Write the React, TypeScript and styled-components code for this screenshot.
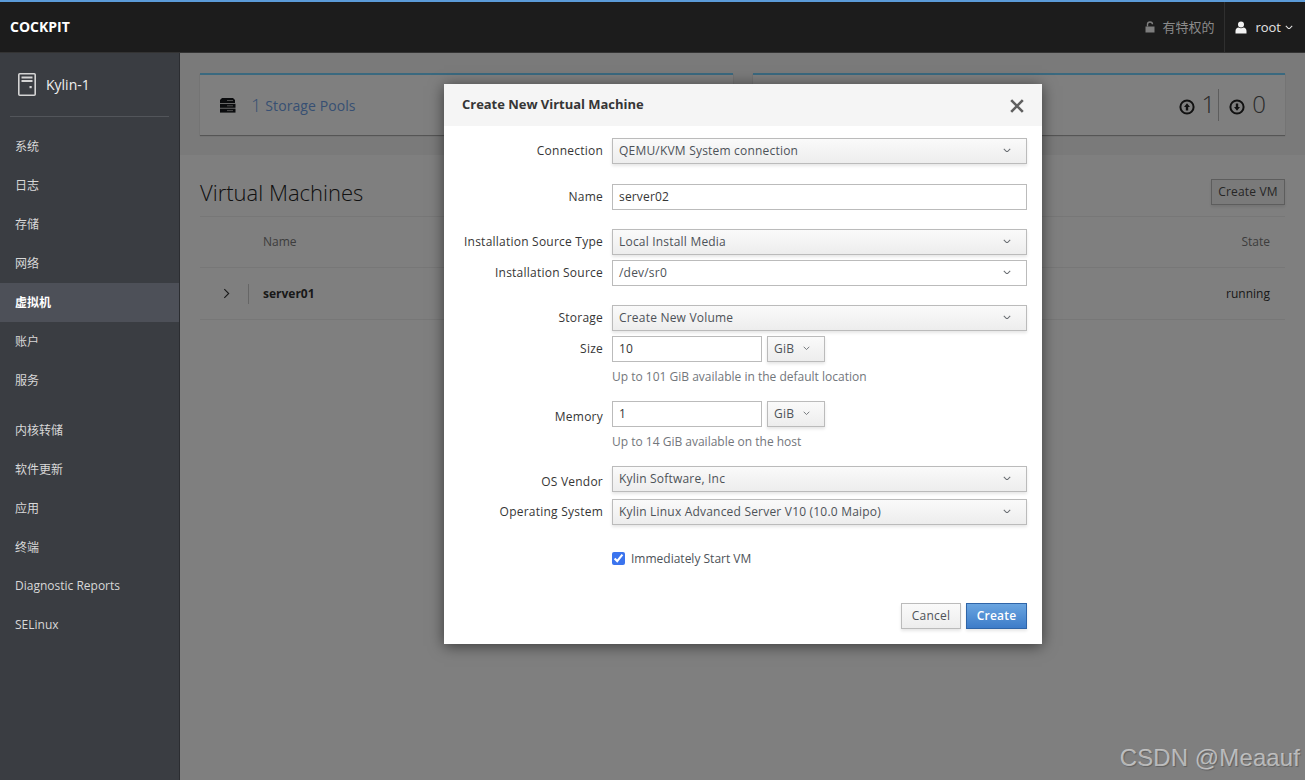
import React from "react";
import styled, { createGlobalStyle } from "styled-components";

const Global = createGlobalStyle`
  html, body { margin: 0; padding: 0; height: 100%; overflow: hidden; }
  #root { height: 780px; }
  * { box-sizing: border-box; }
  body { font-family: "Open Sans", "Noto Sans CJK SC", sans-serif; font-size: 12px; color: #363636; }
`;

const Page = styled.div`
  width: 1305px; height: 780px; display: flex; flex-direction: column; position: relative; overflow: hidden;
`;
const TopBar = styled.header`
  height: 53px; flex: none; background: #1c1c1c; border-top: 2px solid #5b9bd8; border-bottom: 1px solid #333;
  display: flex; align-items: center; color: #fff;
`;
const Brand = styled.div`
  font-weight: 700; font-size: 14px; margin-left: 10px; margin-top: -1px; flex: 1;
`;
const Privilege = styled.div`
  display: flex; align-items: center; gap: 7px; color: #8a8a8a; font-size: 13px; padding: 0 10px 2px 0; height: 100%;
`;
const UserMenu = styled.div`
  display: flex; align-items: center; height: 100%; border-left: 1px solid #2f2f2f; padding: 0 12px 0 10px; gap: 4px; color: #e4e4e4; font-size: 13px;
`;
const UserName = styled.span`
  margin-left: 4px;
`;
const Body = styled.div`
  flex: 1; display: flex; min-height: 0;
`;
const Sidebar = styled.nav`
  width: 180px; flex: none; background: #3a3d42; border-right: 1px solid #2b2d31; color: #d8d8d8;
`;
const Host = styled.div`
  height: 64px; margin: 0 10px; padding: 0 0 0 8px; border-bottom: 1px solid #52555a; display: flex; align-items: center; gap: 10px;
  font-size: 14px; color: #f0f0f0;
`;
const NavList = styled.div<{ $first?: boolean }>`
  padding-top: ${(p) => (p.$first ? "10px" : "11px")};
`;
const NavItem = styled.div<{ $active?: boolean }>`
  height: 39px; display: flex; align-items: center; padding: 0 0 2px 15px; font-size: 12px;
  font-weight: ${(p) => (p.$active ? 700 : 400)};
  color: ${(p) => (p.$active ? "#fff" : "#d8d8d8")};
  background: ${(p) => (p.$active ? "#4d5058" : "transparent")};
`;
const Main = styled.main`
  flex: 1; position: relative; background: #fff; min-width: 0;
`;
const Summary = styled.section`
  height: 102px; background: #f5f5f5; padding: 20px 20px 0; display: grid; grid-template-columns: 533px 532px; gap: 20px;
`;
const Card = styled.div<{ $end?: boolean }>`
  height: 62px; background: #fff; border-top: 2px solid #74d2ff; box-shadow: 0 1px 1px rgba(0,0,0,.3); display: flex; align-items: center;
  justify-content: ${(p) => (p.$end ? "flex-end" : "flex-start")};
  padding: ${(p) => (p.$end ? "0 14px 0 0" : "0 0 0 19px")};
`;
const PoolLink = styled.div`
  display: flex; align-items: center; color: #6e9fe6; font-size: 14px; margin-left: 15px; letter-spacing: .08px;
`;
const PoolCount = styled.span`
  font-size: 18px; font-weight: 300; margin-right: 4px; line-height: 20px;
`;
const Network = styled.div<{ $pad: number }>`
  display: flex; align-items: center; color: #555; font-size: 24px; font-weight: 300; gap: 7px;
  padding-right: ${(p) => p.$pad}px;
`;
const Digit = styled.span`
  padding-bottom: 4px;
`;
const NetworkSep = styled.div`
  width: 1px; height: 32px; background: #bbb; margin: 0 10px 0 0;
`;
const Content = styled.section`
  padding: 0 20px;
`;
const TitleRow = styled.div`
  height: 62px; display: flex; align-items: center; justify-content: space-between; padding-top: 12px;
  border-bottom: 1px solid #eee;
`;
const Title = styled.h1`
  font-size: 22px; font-weight: 300; margin: 0; color: #222;
`;
const GhostButton = styled.button`
  height: 26px; width: 74px; padding: 0; font: 400 12px "Open Sans", sans-serif; letter-spacing: .17px; color: #4d4d4d; background: #f4f4f4;
  border: 1px solid #bbb; box-shadow: 0 2px 3px rgba(3,3,3,.1);
`;
const TableHead = styled.div`
  height: 51px; border-bottom: 1px solid #eee; display: flex; align-items: center; justify-content: space-between;
  padding: 0 15px 2px 63px; color: #7a7a7a;
`;
const TableRow = styled.div`
  height: 52px; border-bottom: 1px solid #eee; display: flex; align-items: center; padding-right: 15px; color: #333;
`;
const Expand = styled.div`
  width: 49px; height: 20px; flex: none; border-right: 1px solid #ccc; margin-right: 14px; display: flex; align-items: center; padding-left: 23px;
`;
const RowName = styled.strong`
  font-weight: 700; flex: 1;
`;
const Backdrop = styled.div`
  position: absolute; inset: 0; background: rgba(0,0,0,.5);
`;
const Modal = styled.div`
  position: absolute; left: 264px; top: 31px; width: 598px; height: 560px; background: #fff; display: flex; flex-direction: column;
  box-shadow: 0 2px 14px rgba(0,0,0,.55);
`;
const ModalHeader = styled.div`
  height: 42px; flex: none; background: #f5f5f5; display: flex; align-items: center; justify-content: space-between; padding: 0 18px;
`;
const ModalTitle = styled.h2`
  font-size: 13px; font-weight: 700; margin: 0 0 2px; color: #363636; letter-spacing: -.03px;
`;
const CloseBtn = styled.div`
  width: 14px; height: 14px; display: flex; margin-right: 0; color: #5f5f5f; margin-top: 1px;
`;
const Form = styled.div`
  flex: 1; padding-top: 12px; display: flex; flex-direction: column;
`;
const Row = styled.div<{ $top?: number }>`
  display: grid; grid-template-columns: 159px 415px; column-gap: 9px; align-items: center;
  margin-top: ${(p) => p.$top ?? 0}px;
`;
const Label = styled.label<{ $low?: boolean }>`
  text-align: right; color: #363636; font-size: 12px; letter-spacing: .23px;
  padding: ${(p) => (p.$low ? "5px 0 0" : "0 0 2px")};
`;
const Select = styled.div`
  height: 26px; background: linear-gradient(#fafafa, #ededed); border: 1px solid #bbb; box-shadow: 0 2px 3px rgba(3,3,3,.1);
  display: flex; align-items: center; justify-content: space-between; padding: 0 15px 2px 6px; color: #4d5258; letter-spacing: .2px;
`;
const PlainSelect = styled(Select)`
  background: #fff; box-shadow: none;
`;
const Input = styled.input`
  height: 26px; width: 100%; border: 1px solid #bbb; background: #fff; padding: 0 6px 1px; color: #363636; letter-spacing: .17px;
  font: 400 12px "Open Sans", sans-serif; outline: none; border-radius: 0;
`;
const Pair = styled.div`
  display: grid; grid-template-columns: 150px 58px; gap: 5px;
`;
const UnitSelect = styled(Select)`
  justify-content: flex-start; gap: 9px; padding-right: 0;
`;
const Help = styled.div`
  margin: 8px 0 0 168px; color: #72767b; line-height: 14px; height: 14px;
`;
const CheckLabel = styled.label`
  display: flex; align-items: center; gap: 6px; color: #4d5258; grid-column: 2;
`;
const Check = styled.input`
  width: 13px; height: 13px; margin: 0; accent-color: #3b74ee;
`;
const Footer = styled.div`
  height: 41px; flex: none; display: flex; justify-content: flex-end; gap: 5px; padding-right: 15px;
`;
const FootBtn = styled.button<{ $primary?: boolean }>`
  height: 26px; padding: 0 0 2px; font: ${(p) => (p.$primary ? 600 : 400)} 12px "Open Sans", sans-serif; letter-spacing: .2px;
  width: ${(p) => (p.$primary ? "61px" : "60px")};
  color: ${(p) => (p.$primary ? "#fff" : "#4d5258")};
  background: ${(p) => (p.$primary ? "linear-gradient(#6aa5e0, #3d7cc9)" : "linear-gradient(#fafafa, #ededed)")};
  border: 1px solid ${(p) => (p.$primary ? "#2f65a8" : "#bbb")};
  box-shadow: 0 2px 3px rgba(3,3,3,.1);
`;
const Watermark = styled.div`
  position: absolute; right: 5px; bottom: 8px; font: 400 24px "Liberation Sans", sans-serif; color: rgba(255,255,255,.55);
  text-shadow: 1px 1px 1px rgba(0,0,0,.25); letter-spacing: .1px;
`;

const Chevron = ({ size = 8, color = "#6a6e73" }: { size?: number; color?: string }) => (
  <svg width={size} height={size * 0.62} viewBox="0 0 10 6" fill="none" stroke={color} strokeWidth="1.3">
    <path d="M1 1l4 4 4-4" />
  </svg>
);
const ServerIcon = () => (
  <svg width="18" height="23" viewBox="0 0 18 23" fill="none">
    <rect x="0.8" y="0.8" width="16.400" height="21.400" rx="1" stroke="#d4d4d4" strokeWidth="1.6" />
    <path d="M3.500 4.500h11M3.500 8h11" stroke="#d4d4d4" strokeWidth="1.8" />
    <rect x="11.500" y="13" width="2.200" height="2.200" fill="#d4d4d4" />
  </svg>
);
const StorageIcon = () => (
  <svg width="17" height="17" viewBox="0 0 17 17">
    <path d="M3 1h11l2 2v3H1V3z" fill="#17191c" />
    <rect x="1" y="6.800" width="15.500" height="4" fill="#17191c" />
    <rect x="1" y="11.600" width="15.500" height="4" fill="#17191c" />
    <path d="M8 3.500h6M8 8.800h6M8 13.600h6" stroke="#9a9a9a" strokeWidth="1" />
  </svg>
);
const ArrowCircle = ({ down }: { down?: boolean }) => (
  <svg width="16" height="16" viewBox="0 0 16 16" fill="none" style={{ marginTop: 4 }}>
    <circle cx="8" cy="8" r="6.600" stroke="#222" strokeWidth="2" />
    <g transform={down ? "rotate(180 8 8)" : undefined}>
      <path d="M8 4.200L11 8H9.200v3.600H6.800V8H5z" fill="#222" />
    </g>
  </svg>
);
const UserIcon = () => (
  <svg width="12" height="13" viewBox="0 0 12 13" fill="#f2f2f2">
    <circle cx="6" cy="3.400" r="3" />
    <path d="M0.500 12.600V10c0-2 1.500-3.200 3-3.400 1.200.7 3.800.7 5 0 1.500.2 3 1.400 3 3.400v2.600z" />
  </svg>
);
const LockIcon = () => (
  <svg width="10" height="12" viewBox="0 0 10 12" fill="none" style={{ marginTop: 2 }}>
    <path d="M2.500 5.500V3.200C2.500 1.800 3.500 1 5 1s2.500.8 2.500 2.200" stroke="#7d7d7d" strokeWidth="1.400" />
    <rect x="0.500" y="5.500" width="9" height="6" fill="#7d7d7d" />
  </svg>
);
const CloseIcon = () => (
  <svg width="14" height="14" viewBox="0 0 14 14" stroke="currentColor" strokeWidth="2.600">
    <path d="M1.200 1.200l11.600 11.600M12.800 1.200L1.200 12.800" />
  </svg>
);
const RightChevron = () => (
  <svg width="7" height="11" viewBox="0 0 8 12" fill="none" stroke="#333" strokeWidth="1.300">
    <path d="M1.500 1l5 5-5 5" />
  </svg>
);

const navA = ["系统", "日志", "存储", "网络", "虚拟机", "账户", "服务"];
const navB = ["内核转储", "软件更新", "应用", "终端", "Diagnostic Reports", "SELinux"];

const Dropdown = ({ children }: { children: React.ReactNode }) => (
  <Select>
    <span>{children}</span>
    <Chevron />
  </Select>
);
const SizeField = ({ value }: { value: string }) => (
  <Pair>
    <Input readOnly value={value} />
    <UnitSelect>
      <span>GiB</span>
      <Chevron size={7} />
    </UnitSelect>
  </Pair>
);

export default function App() {
  return (
    <Page>
      <Global />
      <TopBar>
        <Brand>COCKPIT</Brand>
        <Privilege>
          <LockIcon />
          <span>有特权的</span>
        </Privilege>
        <UserMenu>
          <UserIcon />
          <UserName>root</UserName>
          <Chevron size={8} color="#e4e4e4" />
        </UserMenu>
      </TopBar>
      <Body>
        <Sidebar>
          <Host>
            <ServerIcon />
            <span>Kylin-1</span>
          </Host>
          <NavList $first>
            {navA.map((n) => (
              <NavItem key={n} $active={n === "虚拟机"}>{n}</NavItem>
            ))}
          </NavList>
          <NavList>
            {navB.map((n) => (
              <NavItem key={n}>{n}</NavItem>
            ))}
          </NavList>
        </Sidebar>
        <Main>
          <Summary>
            <Card>
              <StorageIcon />
              <PoolLink>
                <PoolCount>1</PoolCount>
                <span>Storage Pools</span>
              </PoolLink>
            </Card>
            <Card $end>
              <Network $pad={3}>
                <ArrowCircle />
                <Digit>1</Digit>
              </Network>
              <NetworkSep />
              <Network $pad={5}>
                <ArrowCircle down />
                <Digit>0</Digit>
              </Network>
            </Card>
          </Summary>
          <Content>
            <TitleRow>
              <Title>Virtual Machines</Title>
              <GhostButton>Create VM</GhostButton>
            </TitleRow>
            <TableHead>
              <span>Name</span>
              <span>State</span>
            </TableHead>
            <TableRow>
              <Expand><RightChevron /></Expand>
              <RowName>server01</RowName>
              <span>running</span>
            </TableRow>
          </Content>
          <Backdrop />
          <Modal>
            <ModalHeader>
              <ModalTitle>Create New Virtual Machine</ModalTitle>
              <CloseBtn><CloseIcon /></CloseBtn>
            </ModalHeader>
            <Form>
              <Row>
                <Label>Connection</Label>
                <Dropdown>QEMU/KVM System connection</Dropdown>
              </Row>
              <Row $top={20}>
                <Label>Name</Label>
                <Input readOnly value="server02" />
              </Row>
              <Row $top={19}>
                <Label>Installation Source Type</Label>
                <Dropdown>Local Install Media</Dropdown>
              </Row>
              <Row $top={5}>
                <Label>Installation Source</Label>
                <PlainSelect>
                  <span>/dev/sr0</span>
                  <Chevron />
                </PlainSelect>
              </Row>
              <Row $top={19}>
                <Label>Storage</Label>
                <Dropdown>Create New Volume</Dropdown>
              </Row>
              <Row $top={5}>
                <Label>Size</Label>
                <SizeField value="10" />
              </Row>
              <Help>Up to 101 GiB available in the default location</Help>
              <Row $top={17}>
                <Label $low>Memory</Label>
                <SizeField value="1" />
              </Row>
              <Help>Up to 14 GiB available on the host</Help>
              <Row $top={17}>
                <Label $low>OS Vendor</Label>
                <Dropdown>Kylin Software, Inc</Dropdown>
              </Row>
              <Row $top={7}>
                <Label>Operating System</Label>
                <Dropdown>Kylin Linux Advanced Server V10 (10.0 Maipo)</Dropdown>
              </Row>
              <Row $top={25}>
                <CheckLabel>
                  <Check type="checkbox" defaultChecked />
                  <span>Immediately Start VM</span>
                </CheckLabel>
              </Row>
            </Form>
            <Footer>
              <FootBtn>Cancel</FootBtn>
              <FootBtn $primary>Create</FootBtn>
            </Footer>
          </Modal>
        </Main>
      </Body>
      <Watermark>CSDN @Meaauf</Watermark>
    </Page>
  );
}
